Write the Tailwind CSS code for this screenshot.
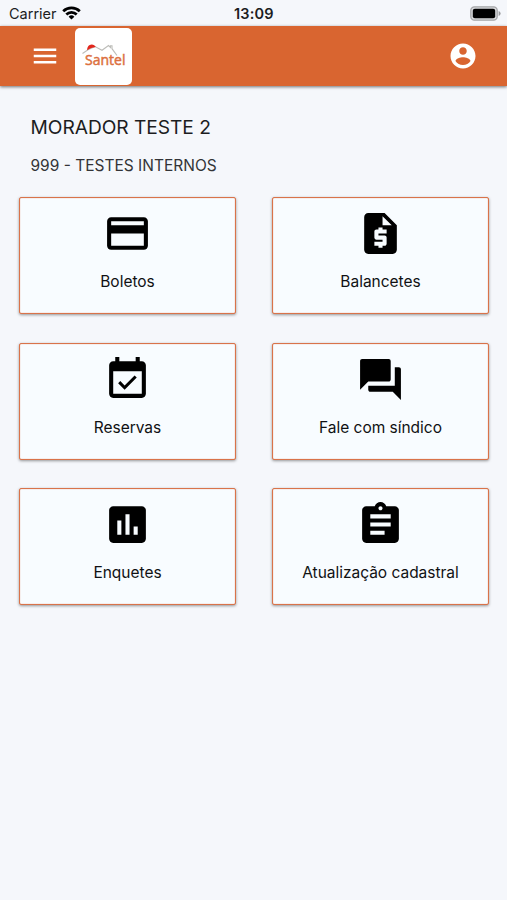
<!DOCTYPE html>
<html lang="pt-BR">
<head>
<meta charset="utf-8">
<title>Santel</title>
<script src="https://cdn.jsdelivr.net/npm/@tailwindcss/browser@4"></script>
</head>
<body class="bg-[#f5f7fb] font-[Inter,sans-serif] text-[#1c1d1f] w-[507px] h-[900px] overflow-hidden">
<div class="h-[26px] flex items-center justify-between pl-[9px] pr-[6px] relative">
  <div class="flex items-center gap-[5px] pt-[2px]">
    <span class="text-[14.5px] leading-[18px]">Carrier</span>
    <svg class="w-[19px] h-[14px] -mt-[3px]" viewBox="0 0 19 14" fill="none" stroke="#000" stroke-width="2.7"><path d="M1.2 5.2a11.9 11.9 0 0 1 16.6 0M4.3 8.5a7.4 7.4 0 0 1 10.4 0"/><path d="M9.5 13.6 6.6 10.7a4.2 4.2 0 0 1 5.8 0z" fill="#000" stroke="none"/></svg>
  </div>
  <span class="absolute left-[234px] top-[5px] text-[14.5px] leading-[18px] tracking-[0.2px] font-semibold">13:09</span>
  <svg class="w-[31px] h-[15px]" viewBox="0 0 31 15"><rect x=".8" y=".8" width="26.4" height="13.4" rx="3.6" fill="#d9dadc" stroke="#a4a5a8" stroke-width="1.3"/><rect x="2.8" y="2.8" width="22.4" height="9.4" rx="2" fill="#000"/><path d="M28.6 5v5q2-.7 2-2.5t-2-2.5z" fill="#999a9d"/></svg>
</div>
<header class="h-[60px] bg-[#d96530] shadow-[0_1px_3px_rgba(0,0,0,0.55)] flex items-center pl-[30px] pr-[29px]">
  <svg class="w-[30px] h-[30px]" viewBox="0 0 24 24" fill="#fff"><path d="M3 18h18v-2H3v2zm0-5h18v-2H3v2zm0-7v2h18V6H3z"/></svg>
  <div class="ml-[15px] w-[57px] h-[57px] rounded-[5px] bg-white">
    <svg class="w-[57px] h-[57px]" viewBox="0 0 57 57"><path d="M7.5 25.5 13 21.8l7-3.3 7 3.8 6.5-4.8 2 2v-1.8h1.5v3L42 27.5" fill="none" stroke="#bdbdb9" stroke-width="1.1"/><path d="M12.3 22.3c-.5-3 1.5-5.8 4.4-5.8 1.9 0 3.3 1 4 2.4-3 .3-5.8 1.5-8.4 3.4z" fill="#e2261c"/><text x="10" y="36.5" textLength="40.5" lengthAdjust="spacingAndGlyphs" font-family="Open Sans, sans-serif" font-size="15" font-weight="500" stroke="#dc7040" stroke-width=".5" fill="#dc7040">Santel</text></svg>
  </div>
  <svg class="ml-auto w-[30px] h-[30px]" viewBox="0 0 24 24" fill="#fff"><path d="M12 2C6.48 2 2 6.48 2 12s4.48 10 10 10 10-4.48 10-10S17.52 2 12 2zm0 3c1.66 0 3 1.34 3 3s-1.34 3-3 3-3-1.34-3-3 1.34-3 3-3zm0 14.2c-2.5 0-4.71-1.28-6-3.22.03-1.99 4-3.08 6-3.08 1.99 0 5.97 1.09 6 3.08-1.29 1.94-3.5 3.22-6 3.22z"/></svg>
</header>
<section class="pl-[30.5px] pt-[29px]">
  <h1 class="text-[19.2px] leading-[24px] tracking-[-0.05px]">MORADOR TESTE 2</h1>
  <h2 class="text-[15.5px] leading-[20px] mt-[17px] text-[#333437]">999 - TESTES INTERNOS</h2>
</section>
<main class="grid grid-cols-[217px_217px] gap-x-[36px] gap-y-[28.5px] pl-[19px] pt-[21px] text-[15.5px] tracking-[-0.02px] text-[#101113]">
  <a class="h-[117px] rounded-[2px] border border-[#d9734a] bg-[#f8fcff] shadow-[0_1px_3px_rgba(0,0,0,0.4),inset_0_0_1px_#d9734a] flex flex-col items-center pt-[11px]">
    <svg class="w-[49px] h-[49px]" viewBox="0 0 24 24"><path d="M20 4H4c-1.11 0-1.99.89-1.99 2L2 18c0 1.11.89 2 2 2h16c1.11 0 2-.89 2-2V6c0-1.11-.89-2-2-2zm0 14H4v-6h16v6zm0-10H4V6h16v2z"/></svg>
    <span class="leading-[20px] mt-[14px]">Boletos</span>
  </a>
  <a class="h-[117px] rounded-[2px] border border-[#d9734a] bg-[#f8fcff] shadow-[0_1px_3px_rgba(0,0,0,0.4),inset_0_0_1px_#d9734a] flex flex-col items-center pt-[11px]">
    <svg class="w-[49px] h-[49px]" viewBox="0 0 24 24"><path d="M14 2H6c-1.1 0-1.99.9-1.99 2L4 20c0 1.1.89 2 1.99 2H18c1.1 0 2-.9 2-2V8l-6-6zm1 10h-4v1h3c.55 0 1 .45 1 1v3c0 .55-.45 1-1 1h-1v1h-2v-1H9v-2h4v-1h-3c-.55 0-1-.45-1-1v-3c0-.55.45-1 1-1h1V9h2v1h2v2zm-2-4V3.5L17.5 8H13z"/></svg>
    <span class="leading-[20px] mt-[14px]">Balancetes</span>
  </a>
  <a class="h-[117px] rounded-[2px] border border-[#d9734a] bg-[#f8fcff] shadow-[0_1px_3px_rgba(0,0,0,0.4),inset_0_0_1px_#d9734a] flex flex-col items-center pt-[11px]">
    <svg class="w-[49px] h-[49px]" viewBox="0 0 24 24"><path d="M16.53 11.06 15.47 10l-4.88 4.88-2.12-2.12-1.06 1.06L10.59 17l5.94-5.94zM19 3h-1V1h-2v2H8V1H6v2H5c-1.11 0-1.99.9-1.99 2L3 19c0 1.1.89 2 2 2h14c1.1 0 2-.9 2-2V5c0-1.1-.9-2-2-2zm0 16H5V8h14v11z"/></svg>
    <span class="leading-[20px] mt-[14px]">Reservas</span>
  </a>
  <a class="h-[117px] rounded-[2px] border border-[#d9734a] bg-[#f8fcff] shadow-[0_1px_3px_rgba(0,0,0,0.4),inset_0_0_1px_#d9734a] flex flex-col items-center pt-[11px]">
    <svg class="w-[49px] h-[49px]" viewBox="0 0 24 24"><path d="M21 6h-2v9H6v2c0 .55.45 1 1 1h11l4 4V7c0-.55-.45-1-1-1zm-4 6V3c0-.55-.45-1-1-1H3c-.55 0-1 .45-1 1v14l4-4h10c.55 0 1-.45 1-1z"/></svg>
    <span class="leading-[20px] mt-[14px]">Fale com síndico</span>
  </a>
  <a class="h-[117px] rounded-[2px] border border-[#d9734a] bg-[#f8fcff] shadow-[0_1px_3px_rgba(0,0,0,0.4),inset_0_0_1px_#d9734a] flex flex-col items-center pt-[11px]">
    <svg class="w-[49px] h-[49px]" viewBox="0 0 24 24"><path d="M19 3H5c-1.1 0-2 .9-2 2v14c0 1.1.9 2 2 2h14c1.1 0 2-.9 2-2V5c0-1.1-.9-2-2-2zM9 17H7v-7h2v7zm4 0h-2V7h2v10zm4 0h-2v-4h2v4z"/></svg>
    <span class="leading-[20px] mt-[14px]">Enquetes</span>
  </a>
  <a class="h-[117px] rounded-[2px] border border-[#d9734a] bg-[#f8fcff] shadow-[0_1px_3px_rgba(0,0,0,0.4),inset_0_0_1px_#d9734a] flex flex-col items-center pt-[11px]">
    <svg class="w-[49px] h-[49px]" viewBox="0 0 24 24"><path d="M19 3h-4.18C14.4 1.84 13.3 1 12 1c-1.3 0-2.4.84-2.82 2H5c-1.1 0-2 .9-2 2v14c0 1.1.9 2 2 2h14c1.1 0 2-.9 2-2V5c0-1.1-.9-2-2-2zm-7 0c.55 0 1 .45 1 1s-.45 1-1 1-1-.45-1-1 .45-1 1-1zm2 14H7v-2h7v2zm3-4H7v-2h10v2zm0-4H7V7h10v2z"/></svg>
    <span class="leading-[20px] mt-[14px]">Atualização cadastral</span>
  </a>
</main>
</body>
</html>
